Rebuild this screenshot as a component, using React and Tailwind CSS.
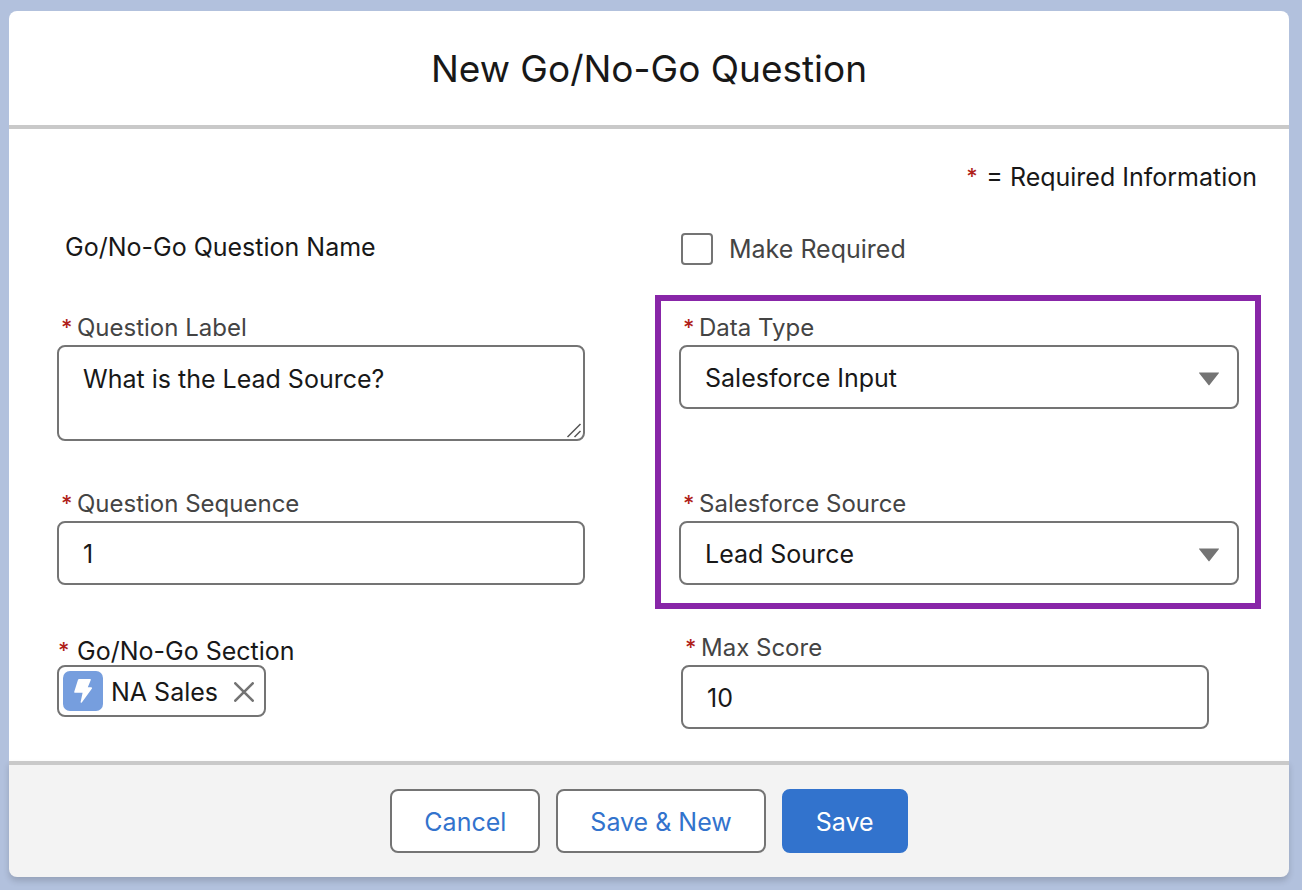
import React, { useState } from "react";

const control =
  "block w-full rounded-lg border-2 border-[#747474] bg-white px-6 text-[25px] text-[#181818] outline-none focus:border-[#3273cd]";

const button = "h-16 rounded-lg border-2 px-8 pt-1";

function Star({ className = "" }) {
  return (
    <span aria-hidden="true" className={`inline-block w-5 shrink-0 text-[22px] font-medium text-[#b01f1b] ${className}`}>
      *
    </span>
  );
}

function Field({ id, label, children }) {
  return (
    <div>
      <label htmlFor={id} className="flex text-[24px] leading-[34px] text-[#444444]">
        <Star className="-mt-px pl-1" />
        {label}
      </label>
      {children}
    </div>
  );
}

function Select({ id, options }) {
  return (
    <div className="relative">
      <select id={id} required className={`${control} h-16 appearance-none pt-1 pr-14`}>
        {options.map((option) => (
          <option key={option}>{option}</option>
        ))}
      </select>
      <svg
        viewBox="0 0 20 14"
        className="pointer-events-none absolute top-[27px] right-5 h-[14px] w-5 fill-[#747474]"
        aria-hidden="true"
      >
        <path d="M0.5 0.4h19c.5 0 .6.4.3.8L10.5 13.100c-.3.4-.7.4-1 0L.2 1.200C-.1.8 0 .4.5.4z" />
      </svg>
    </div>
  );
}

export default function App() {
  const [section, setSection] = useState("NA Sales");

  return (
    <main className="min-h-screen bg-[#b2c1dd] pt-[11px] pr-[13px] pb-[13px] pl-[9px] font-['Inter',sans-serif] text-[25px] text-[#181818]">
      <form onSubmit={(event) => event.preventDefault()}>
        <header className="rounded-t-lg border-b-4 border-[#c9c9c9] bg-white pt-[37px] pb-[35px] text-center">
          <h1 className="text-[37px] leading-[42px]">New Go/No-Go Question</h1>
        </header>

        <div className="bg-white pt-8 pr-7 pb-8 pl-12">
          <p className="flex justify-end pr-1 leading-8">
            <Star className="-mt-px" />= Required Information
          </p>

          <div className="mt-10 grid grid-cols-[528fr_606fr] gap-x-[70px]">
            <p className="pl-2 leading-7">Go/No-Go Question Name</p>
            <label className="flex items-center gap-4 pl-[26px] leading-8 text-[#444444]">
              <input
                type="checkbox"
                className="size-8 appearance-none rounded-sm border-2 border-[#747474] bg-white checked:bg-[#3273cd]"
              />
              Make Required
            </label>

            <div className="mt-[30px] flex flex-col justify-between pt-4 pb-6">
              <Field id="question-label" label="Question Label">
                <div className="relative">
                  <textarea
                    id="question-label"
                    required
                    defaultValue="What is the Lead Source?"
                    className={`${control} h-24 resize-none py-4 leading-8`}
                  />
                  <svg
                    viewBox="0 0 16 16"
                    className="pointer-events-none absolute right-[3px] bottom-[3px] size-4 stroke-[#555555]"
                    fill="none"
                    strokeWidth="1.5"
                    aria-hidden="true"
                  >
                    <path d="M1.5 15 14.5 2M8.5 15l6-6" />
                  </svg>
                </div>
              </Field>
              <Field id="question-sequence" label="Question Sequence">
                <input id="question-sequence" required defaultValue="1" className={`${control} h-16 pt-0.5`} />
              </Field>
            </div>

            <div className="mt-[30px] flex flex-col gap-[78px] border-6 border-[#8826a8] pt-[10px] pr-4 pb-[18px] pl-[18px]">
              <Field id="data-type" label="Data Type">
                <Select id="data-type" options={["Salesforce Input", "Text", "Number"]} />
              </Field>
              <Field id="salesforce-source" label="Salesforce Source">
                <Select id="salesforce-source" options={["Lead Source", "Account", "Opportunity"]} />
              </Field>
            </div>

            <div className="mt-7">
              <p className="flex leading-7">
                <Star className="-mt-px pl-px" />
                Go/No-Go Section
              </p>
              {section && (
                <div className="inline-flex h-[52px] items-center rounded-lg border-2 border-[#747474] pr-2 pl-1">
                  <svg viewBox="0 0 40 40" className="size-10" aria-hidden="true">
                    <rect width="40" height="40" rx="7" fill="#769ede" />
                    <path
                      d="M16.200 8h10.800c.7 0 1 .6.7 1.200L24.800 16.300h3.400c.8 0 1.100.8.600 1.400L18.800 31.400c-.6.7-1.400.3-1.200-.5L19.600 21.800h-7.400c-.8 0-1.200-.6-.9-1.300L15 8.800c.2-.5.6-.8 1.200-.8z"
                      fill="#fff"
                    />
                  </svg>
                  <span className="pt-0.5 pl-2 leading-8">{section}</span>
                  <button
                    type="button"
                    aria-label="Remove NA Sales"
                    onClick={() => setSection("")}
                    className="ml-3.5 flex size-6 items-center justify-center pt-0.5"
                  >
                    <svg
                      viewBox="0 0 20 20"
                      className="size-5 stroke-[#747474]"
                      fill="none"
                      strokeWidth="2.6"
                      strokeLinecap="round"
                    >
                      <path d="M1.300 1.300 18.700 18.700M18.700 1.300 1.300 18.700" />
                    </svg>
                  </button>
                </div>
              )}
            </div>

            <div className="mt-[22px] pr-[52px] pl-[26px]">
              <Field id="max-score" label="Max Score">
                <input id="max-score" required defaultValue="10" className={`${control} h-16 pt-0.5`} />
              </Field>
            </div>
          </div>
        </div>

        <footer className="flex justify-center gap-4 rounded-b-lg border-t-4 border-[#c9c9c9] bg-[#f3f3f3] py-6 shadow-[0_4px_6px_rgba(0,0,0,0.16)]">
          <button type="button" className={`${button} border-[#747474] bg-white text-[#3273cd]`}>
            Cancel
          </button>
          <button type="submit" className={`${button} border-[#747474] bg-white text-[#3273cd]`}>
            Save &amp; New
          </button>
          <button type="submit" className={`${button} border-[#3273cd] bg-[#3273cd] text-white`}>
            Save
          </button>
        </footer>
      </form>
    </main>
  );
}
